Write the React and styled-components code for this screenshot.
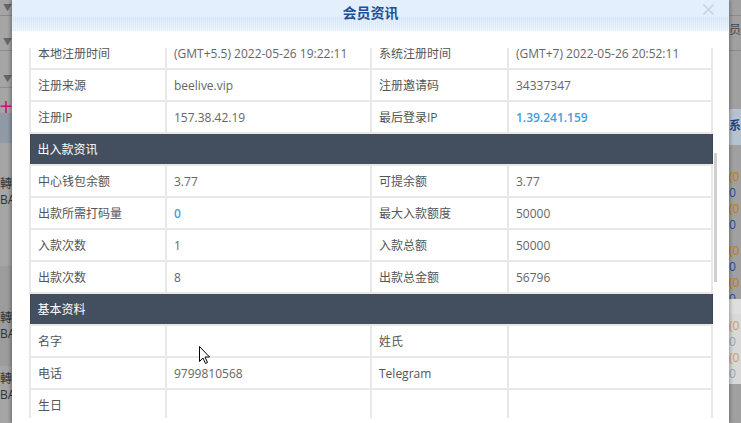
import React from 'react'
import styled, { createGlobalStyle } from 'styled-components'

const GlobalStyle = createGlobalStyle`
  html, body { margin: 0; padding: 0; background: #a6a6a6; }
  body { font-family: "Open Sans", "Noto Sans CJK SC", sans-serif; font-size: 12px; }
`

const Page = styled.div`
  display: flex;
  width: 741px;
  height: 423px;
  overflow: hidden;
  position: relative;
`

// dimmed page behind the dialog
const Strip = styled.div`
  width: 12px;
  flex: none;
  display: flex;
  flex-direction: column;
  overflow: hidden;
  background: ${p => p.$bg || '#a5a5a5'};
  color: #333;
  font-size: 12px;
  line-height: 16px;
  white-space: nowrap;
`

const StripCell = styled.div`
  height: ${p => p.$h}px;
  flex: none;
  background: ${p => p.$bg || 'transparent'};
  border-bottom: ${p => (p.$line ? '1px solid #8c8c8c' : 'none')};
  color: ${p => p.$color || '#333'};
  padding-top: ${p => p.$pt || 0}px;
  padding-left: ${p => p.$pl || 0}px;
  box-sizing: border-box;
  font-size: ${p => p.$fs || 12}px;
  font-weight: ${p => (p.$bold ? 700 : 400)};
`

const Alt = styled.span`
  color: ${p => p.$color};
`

const Modal = styled.div`
  width: 717px;
  flex: none;
  display: flex;
  flex-direction: column;
  background: #fff;
  box-shadow: -2px 0 3px rgba(0, 0, 0, 0.25), 2px 0 3px rgba(0, 0, 0, 0.2);
  z-index: 1;
`

const Header = styled.div`
  height: 32px;
  flex: none;
  display: grid;
  grid-template-columns: 1fr auto 1fr;
  align-items: start;
  background:
    repeating-linear-gradient(90deg, rgba(255,255,255,0.35) 0 1px, transparent 1px 2px) 0 17px / 100% 14px no-repeat,
    linear-gradient(#e3effc 0, #e3effc 16px, #d2e5f8 18px, #e6f1fc 31px, #fff 31px);
`

const Title = styled.div`
  grid-column: 2;
  padding-top: 3px;
  font-family: "Noto Sans CJK SC", sans-serif;
  font-size: 14px;
  font-weight: 700;
  line-height: 18px;
  color: #1d4f9a;
`

const Close = styled.div`
  grid-column: 3;
  justify-self: end;
  margin-right: 14px;
  width: 13px;
  height: 13px;
  margin-top: 3px;
  color: #c4d2ea;
`

const Body = styled.div`
  flex: 1;
  padding: 16px 0 0 17px;
  display: flex;
  align-items: flex-start;
`

const Viewport = styled.div`
  height: 370px;
  display: flex;
  overflow: hidden;
`

const Table = styled.table`
  width: 682px;
  border-collapse: collapse;
  table-layout: fixed;
  margin-top: -12px;
  align-self: flex-start;
  color: #666;
`

const Row = styled.tr`
  height: 32px;
`

const Label = styled.td`
  border: 2px solid #e8e8e8;
  padding: 0 0 0 7px;
  color: #555;
  font-size: 12px;
  white-space: nowrap;
`

const Value = styled.td`
  border: 2px solid #e8e8e8;
  padding: 0 0 0 7px;
  color: ${p => (p.$link ? '#3fa0dc' : '#666')};
  font-weight: ${p => (p.$link ? 600 : 400)};
  white-space: nowrap;
`

const Section = styled.td`
  background: #434f5f;
  border: 1px solid #3a4555;
  color: #fff;
  padding: 0 0 0 7px;
  font-size: 12px;
`

const Track = styled.div`
  width: 18px;
  padding: 105px 0 0 1px;
  box-sizing: border-box;
`

const Thumb = styled.div`
  width: 3px;
  height: 129px;
  background: #cfcfcf;
`

const Cursor = styled.svg`
  position: absolute;
  left: 199px;
  top: 346px;
  z-index: 5;
`

const rows = [
  { cells: [['本地注册时间', '(GMT+5.5) 2022-05-26 19:22:11'], ['系统注册时间', '(GMT+7) 2022-05-26 20:52:11']] },
  { cells: [['注册来源', 'beelive.vip'], ['注册邀请码', '34337347']] },
  { cells: [['注册IP', '157.38.42.19'], ['最后登录IP', '1.39.241.159', true]] },
  { section: '出入款资讯' },
  { cells: [['中心钱包余额', '3.77'], ['可提余额', '3.77']] },
  { cells: [['出款所需打码量', '0', true], ['最大入款额度', '50000']] },
  { cells: [['入款次数', '1'], ['入款总额', '50000']] },
  { cells: [['出款次数', '8'], ['出款总金额', '56796']] },
  { section: '基本资料' },
  { cells: [['名字', ''], ['姓氏', '']] },
  { cells: [['电话', '9799810568'], ['Telegram', '']] },
  { cells: [['生日', ''], ['', '']] },
]

const App = () => {
  return (
    <Page>
      <GlobalStyle />
      <Strip>
        <StripCell $h={16} $line $pl={3} $color="#666" $fs={9}>▼</StripCell>
        <StripCell $h={35} $line $pt={18} $pl={3} $color="#666" $fs={9}>▼</StripCell>
        <StripCell $h={37} $line $pt={20} $pl={3} $color="#666" $fs={9}>▼</StripCell>
        <StripCell $h={25} $pt={12} $color="#c0187a" $bold>十:</StripCell>
        <StripCell $h={30} $bg="#8f9aa6" />
        <StripCell $h={33} />
        <StripCell $h={50} $color="#333">轉<br />BA</StripCell>
        <StripCell $h={40} />
        <StripCell $h={100} $bg="#9c9c9c" $pt={44}>轉<br />BA</StripCell>
        <StripCell $h={60} $pt={5}>轉<br />BA</StripCell>
      </Strip>
      <Modal>
        <Header>
          <Title>会员资讯</Title>
          <Close>
            <svg width="13" height="13" viewBox="0 0 13 13">
              <path d="M1.5 1.5 L11.5 11.5 M11.5 1.5 L1.5 11.5" stroke="currentColor" strokeWidth="1.6" fill="none" />
            </svg>
          </Close>
        </Header>
        <Body>
          <Viewport>
            <Table>
              <colgroup>
                <col style={{ width: 136 }} />
                <col style={{ width: 205 }} />
                <col style={{ width: 137 }} />
                <col style={{ width: 204 }} />
              </colgroup>
              <tbody>
                {rows.map((r, i) =>
                  r.section ? (
                    <Row key={i}>
                      <Section colSpan={4}>{r.section}</Section>
                    </Row>
                  ) : (
                    <Row key={i}>
                      {r.cells.map(([k, v, link], j) => (
                        <React.Fragment key={j}>
                          <Label>{k}</Label>
                          <Value $link={link}>{v}</Value>
                        </React.Fragment>
                      ))}
                    </Row>
                  )
                )}
              </tbody>
            </Table>
            <Track>
              <Thumb />
            </Track>
          </Viewport>
        </Body>
      </Modal>
      <Strip $bg="#a0a0a0">
        <StripCell $h={16} $line />
        <StripCell $h={35} $line $pt={6} $color="#444">员!</StripCell>
        <StripCell $h={58} />
        <StripCell $h={36} $bg="#b6c2cf" $pt={9} $color="#1d3f7a" $bold>系</StripCell>
        <StripCell $h={20} />
        <StripCell $h={62} $pt={4} $color="#c07a00">(0<br /><Alt $color="#1d4f9a">0</Alt><br />(0<br /><Alt $color="#1d4f9a">0</Alt></StripCell>
        <StripCell $h={12} />
        <StripCell $h={60} $pt={4} $color="#c07a00">(0<br /><Alt $color="#1d4f9a">0</Alt><br />(0<br /><Alt $color="#1d4f9a">0</Alt></StripCell>
        <StripCell $h={15} $bg="#dedede" />
        <StripCell $h={70} $bg="#d8d8d8" $pt={4} $color="#c9a060">(0<br /><Alt $color="#9aa4b4">0</Alt><br />(0<br /><Alt $color="#9aa4b4">0</Alt></StripCell>
      </Strip>
      <Cursor width="12" height="19" viewBox="0 0 12 19">
        <path d="M0.5 0.5 L0.5 15.5 L4 12 L6.5 17.5 L8.5 16.5 L6 11 L10.5 11 Z" fill="#fff" stroke="#000" strokeWidth="1" />
      </Cursor>
    </Page>
  )
}

export default App
